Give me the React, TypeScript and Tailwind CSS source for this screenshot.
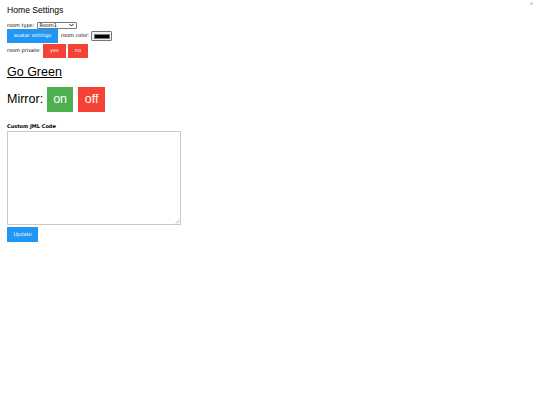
import React from "react";

const sans = { fontFamily: '"Liberation Sans", Arial, sans-serif' };
const dv = { fontFamily: '"DejaVu Sans", Verdana, sans-serif' };

export default function App() {
  return (
    <div className="relative w-[540px] h-[405px] bg-white text-black overflow-hidden">
      <span className="absolute left-[530px] top-[0px] text-[5px] leading-[7px] text-[#f26b60]" style={dv}>x</span>
      <div className="flex flex-col items-start pl-[7px] pt-[4px]">
        <div className="text-[8.6px] leading-[12px] h-[12px]" style={sans}>Home Settings</div>
        <div className="flex items-center h-[8px] mt-[5px]" style={dv}>
          <span className="text-[5px] leading-[8px]">room type:</span>
          <div className="ml-[3px] w-[40px] h-[7px] border border-[#767676] rounded-[1px] flex items-center justify-between px-[1px] bg-white">
            <span className="text-[5px] leading-[6px]">Room1</span>
            <svg width="5" height="4" viewBox="0 0 10 8" className="mr-[1px]">
              <path d="M1 2 L5 6 L9 2" fill="none" stroke="#000" strokeWidth="1.8" />
            </svg>
          </div>
        </div>
        <div className="flex items-center h-[14px] mt-[0px]" style={dv}>
          <div className="w-[51px] h-[14px] bg-[#2196F3] text-white text-[5px] flex items-center justify-center">avatar settings</div>
          <span className="ml-[3px] text-[5px]">room color:</span>
          <div className="ml-[2px] w-[21px] h-[10px] border border-[#767676] rounded-[1px] bg-[#efefef] p-[1.5px]">
            <div className="w-full h-full bg-black border border-[#777]" />
          </div>
        </div>
        <div className="flex items-center h-[14px] mt-[1px]" style={dv}>
          <span className="text-[5px]">room private:</span>
          <div className="ml-[2px] w-[23px] h-[14px] bg-[#f44336] text-white text-[5px] flex items-center justify-center">yes</div>
          <div className="ml-[2px] w-[20px] h-[14px] bg-[#f44336] text-white text-[5px] flex items-center justify-center">no</div>
        </div>
        <div className="mt-[7px] text-[12.5px] leading-[15px] underline underline-offset-[1px]" style={sans}>Go Green</div>
        <div className="flex items-center h-[26px] mt-[6px]" style={sans}>
          <span className="text-[12.5px]">Mirror:</span>
          <div className="ml-[4px] w-[26px] h-[25px] bg-[#4CAF50] text-white text-[12.5px] flex items-center justify-center">on</div>
          <div className="ml-[5px] w-[27px] h-[25px] bg-[#f44336] text-white text-[12.5px] flex items-center justify-center">off</div>
        </div>
        <div className="mt-[11px] text-[5px] font-bold leading-[7px]" style={dv}>Custom JML Code</div>
        <div className="relative mt-[1px] w-[174px] h-[94px]">
          <textarea className="block w-[174px] h-[94px] border border-[#c8c8c8] bg-white outline-none resize-none" style={dv} readOnly />
          <svg className="absolute right-[1px] bottom-[1px]" width="5" height="5" viewBox="0 0 5 5">
            <path d="M4.5 0.5 L0.5 4.5 M4.5 2.5 L2.5 4.5" stroke="#b5b5b5" strokeWidth="0.8" />
          </svg>
        </div>
        <div className="mt-[2px] w-[31px] h-[15px] bg-[#2196F3] text-white text-[5px] flex items-center justify-center" style={dv}>Update</div>
      </div>
    </div>
  );
}
